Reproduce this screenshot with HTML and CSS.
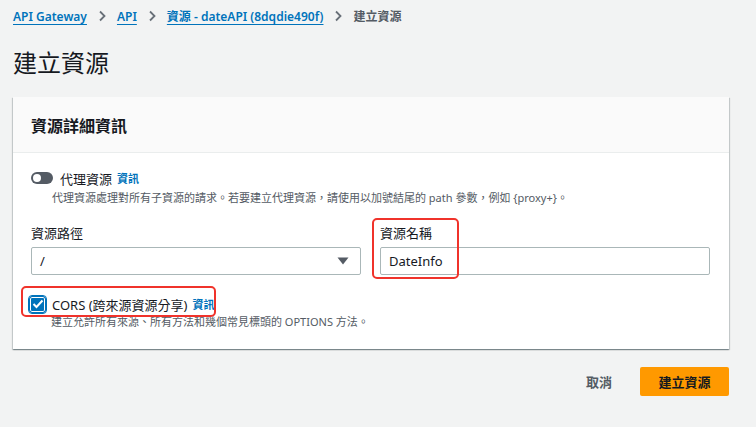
FILE: index.html
```html
<!DOCTYPE html>
<html lang="zh-Hant">
<head>
<meta charset="utf-8">
<link rel="stylesheet" href="styles.css">
</head>
<body>
<div class="page">
  <nav class="crumbs">
    <a class="crumb" href="#">API Gateway</a>
    <svg class="chev" width="10" height="12" viewBox="0 0 10 12"><path d="M3 1.5 L7.5 6 L3 10.5" fill="none" stroke="#687078" stroke-width="1.8"/></svg>
    <a class="crumb" href="#">API</a>
    <svg class="chev" width="10" height="12" viewBox="0 0 10 12"><path d="M3 1.5 L7.5 6 L3 10.5" fill="none" stroke="#687078" stroke-width="1.8"/></svg>
    <a class="crumb" href="#">資源 - dateAPI (8dqdie490f)</a>
    <svg class="chev" width="10" height="12" viewBox="0 0 10 12"><path d="M3 1.5 L7.5 6 L3 10.5" fill="none" stroke="#687078" stroke-width="1.8"/></svg>
    <span class="crumb-current">建立資源</span>
  </nav>

  <h1 class="title">建立資源</h1>

  <section class="card">
    <header class="card-head">資源詳細資訊</header>
    <div class="card-body">
      <div class="toggle-row">
        <span class="toggle"><span class="knob"></span></span>
        <span class="opt-label">代理資源</span>
        <a class="info" href="#">資訊</a>
      </div>
      <p class="desc desc-toggle">代理資源處理對所有子資源的請求。若要建立代理資源，請使用以加號結尾的 path 參數，例如 {proxy+}。</p>

      <div class="fields">
        <div class="field">
          <label class="field-label">資源路徑</label>
          <div class="select">
            <span>/</span>
            <svg width="12" height="8" viewBox="0 0 12 8"><path d="M0.5 0.5 H11.5 L6 7.5 Z" fill="#545b64"/></svg>
          </div>
        </div>
        <div class="field">
          <label class="field-label">資源名稱</label>
          <div class="input">DateInfo</div>
          <span class="mark mark-name"></span>
        </div>
      </div>

      <div class="check-row">
        <span class="checkbox"><svg width="12" height="10" viewBox="0 0 12 10"><path d="M1.5 5 L4.5 8 L10.5 1.5" fill="none" stroke="#fff" stroke-width="2"/></svg></span>
        <span class="opt-label">CORS (跨來源資源分享)</span>
        <a class="info" href="#">資訊</a>
        <span class="mark mark-cors"></span>
      </div>
      <p class="desc desc-check">建立允許所有來源、所有方法和幾個常見標頭的 OPTIONS 方法。</p>
    </div>
  </section>

  <div class="actions">
    <button class="btn-link">取消</button>
    <button class="btn-primary">建立資源</button>
  </div>
</div>
</body>
</html>
```

FILE: styles.css
```css
* { box-sizing: border-box; }
html, body { margin: 0; padding: 0; }
body {
  background: #f2f3f3;
  font-family: "Noto Sans", "Noto Sans CJK TC", sans-serif;
  color: #16191f;
  width: 756px;
  height: 427px;
  overflow: hidden;
}
.page { padding: 6px 27px 0 13px; }

.crumbs {
  display: flex;
  align-items: center;
  gap: 9px;
  height: 20px;
  font-size: 12px;
}
.crumb {
  color: #0073bb;
  text-decoration: underline;
  text-underline-offset: 3px;
  font-weight: 600;
}
.chev { margin: 0 1px; }
.crumb-current { color: #545b64; font-weight: 600; }

.title {
  margin: 0;
  margin-top: 21px;
  font-size: 24px;
  font-weight: 400;
  line-height: 32px;
  height: 32px;
}

.card {
  margin-top: 18px;
  background: #fff;
  box-shadow: 0 1px 1px 0 rgba(0,28,36,.3), 1px 1px 1px 0 rgba(0,28,36,.15), -1px 1px 1px 0 rgba(0,28,36,.15);
  width: 716px;
}
.card-head {
  height: 56px;
  background: #fafafa;
  border-bottom: 1px solid #eaeded;
  padding: 0 18px;
  display: flex;
  align-items: center;
  font-size: 16px;
  font-weight: 700;
}
.card-body {
  padding: 16px 18px 19px;
  position: relative;
}

.toggle-row, .check-row {
  display: flex;
  align-items: center;
  height: 18px;
  font-size: 13px;
}
.toggle {
  width: 22px;
  height: 12px;
  border-radius: 6px;
  background: #545b64;
  position: relative;
  margin-right: 7px;
}
.knob {
  position: absolute;
  left: 2px;
  top: 2px;
  width: 8px;
  height: 8px;
  border-radius: 50%;
  background: #fff;
}
.opt-label { color: #16191f; }
.info {
  color: #0073bb;
  font-weight: 700;
  font-size: 11px;
  text-decoration: none;
  margin-left: 5px;
}
.desc {
  margin: 0;
  color: #545b64;
  font-size: 11px;
  line-height: 16px;
  padding-left: 21px;
}
.desc-toggle { margin-top: 3px; }

.fields {
  display: grid;
  grid-template-columns: 330px 330px;
  gap: 19px;
  margin-top: 18px;
}
.field { position: relative; }
.field-label {
  display: block;
  font-size: 13px;
  line-height: 18px;
  margin-bottom: 5px;
}
.select, .input {
  height: 28px;
  border: 1px solid #aab7b8;
  border-radius: 2px;
  display: flex;
  align-items: center;
  justify-content: space-between;
  padding: 0 10px 0 8px;
  font-size: 13px;
  background: #fff;
}
.select svg { margin-right: 1px; }

.check-row {
  margin-top: 19px;
  position: relative;
  height: 20px;
}
.checkbox {
  width: 17px;
  height: 17px;
  border-radius: 3px;
  background: #0073bb;
  box-shadow: 0 0 0 1px #fff inset;
  border: 1px solid #0073bb;
  outline: 1px solid #0073bb;
  display: flex;
  align-items: center;
  justify-content: center;
  margin-left: -2px;
  margin-right: 6px;
}
.desc-check { padding-left: 20px; margin-top: 0; }

.mark {
  position: absolute;
  border: 2.5px solid #f0332b;
  border-radius: 5px;
  pointer-events: none;
}
.mark-name { left: -8px; top: -6px; width: 87px; height: 61px; }
.mark-cors { left: -10px; top: -8px; width: 195px; height: 31px; }

.actions {
  display: flex;
  justify-content: flex-end;
  align-items: center;
  gap: 28px;
  margin-top: 18px;
  width: 716px;
}
.btn-link {
  border: 0;
  background: none;
  font-family: inherit;
  font-size: 13px;
  font-weight: 700;
  color: #545b64;
  padding: 0;
}
.btn-primary {
  border: 0;
  background: #ff9900;
  border-radius: 2px;
  height: 29px;
  width: 89px;
  font-family: inherit;
  font-size: 13px;
  font-weight: 700;
  color: #16191f;
}
```
